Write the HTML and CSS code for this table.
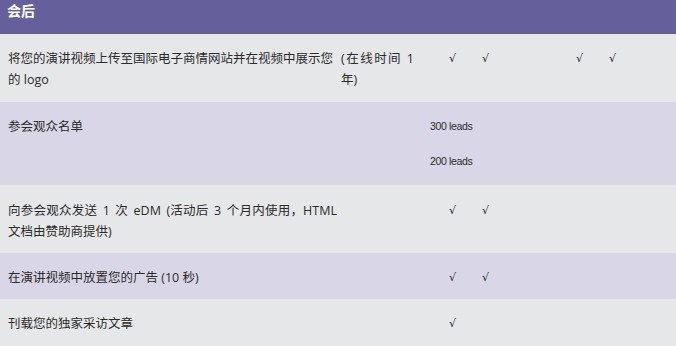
FILE: index.html
```html
<!DOCTYPE html>
<html lang="zh-CN">
<head>
<meta charset="utf-8">
<title>会后</title>
<link rel="stylesheet" href="styles.css">
</head>
<body>
<div class="sheet">
  <div class="head">会后</div>

  <div class="row grey first">
    <div class="c-a">将您的演讲视频上传至国际电子商情网站并在视频中展示您的 logo</div>
    <div class="c-b">(在线时间 1 年)</div>
    <div class="c-1 tick">√</div>
    <div class="c-2 tick">√</div>
    <div class="c-4 tick">√</div>
    <div class="c-5 tick">√</div>
  </div>

  <div class="row lav leads-row">
    <div class="lbl">参会观众名单</div>
    <div class="leads">
      <span>300 leads</span>
      <span>200 leads</span>
    </div>
  </div>

  <div class="row grey tall">
    <div class="c-a wide">向参会观众发送 1 次 eDM (活动后 3 个月内使用，HTML 文档由赞助商提供)</div>
    <div class="c-1 tick">√</div>
    <div class="c-2 tick">√</div>
  </div>

  <div class="row lav">
    <div class="c-a">在演讲视频中放置您的广告 (10 秒)</div>
    <div class="c-1 tick">√</div>
    <div class="c-2 tick">√</div>
  </div>

  <div class="row grey">
    <div class="c-a">刊载您的独家采访文章</div>
    <div class="c-1 tick">√</div>
  </div>
</div>
</body>
</html>
```

FILE: styles.css
```css
html, body {
  margin: 0;
  padding: 0;
  background: #e6e7e9;
}

.sheet {
  width: 676px;
  font-family: "Open Sans", "Noto Sans CJK SC", sans-serif;
  font-size: 12.5px;
  line-height: 21px;
  color: #2b2b2b;
}

.head {
  height: 34px;
  box-sizing: border-box;
  padding: 0 0 0 7px;
  line-height: 20px;
  background: #655f9b;
  color: #ffffff;
  font-weight: bold;
  font-size: 14px;
  font-family: "Noto Sans CJK SC", sans-serif;
}

.row {
  display: grid;
  grid-template-columns: 332px 96px 33px 33px 61px 33px 33px;
  padding: 14px 0 11px 8px;
  align-items: start;
}

.row.first {
  padding-bottom: 12px;
}

.row.tall {
  padding-top: 15px;
}

.grey { background: #e6e7e9; }
.lav { background: #d9d6e7; }

.c-a {
  grid-column: 1;
  padding-right: 7px;
  text-align: justify;
}

.c-a.wide {
  padding-right: 3px;
  word-spacing: 2px;
}

.c-b {
  grid-column: 2;
  padding-left: 1px;
  padding-right: 22px;
  text-align: justify;
}

.c-1 { grid-column: 3; }
.c-2 { grid-column: 4; }
.c-4 { grid-column: 6; }
.c-5 { grid-column: 7; }

.tick {
  text-align: center;
  font-family: "DejaVu Sans", sans-serif;
  font-size: 11px;
}

.leads-row {
  grid-template-columns: 422px 1fr;
  padding-bottom: 13px;
}

.lbl {
  grid-column: 1;
}

.leads {
  grid-column: 2;
  display: flex;
  flex-direction: column;
  gap: 14px;
  font-family: "Liberation Sans", sans-serif;
  font-size: 10.5px;
  letter-spacing: -0.35px;
}
```
